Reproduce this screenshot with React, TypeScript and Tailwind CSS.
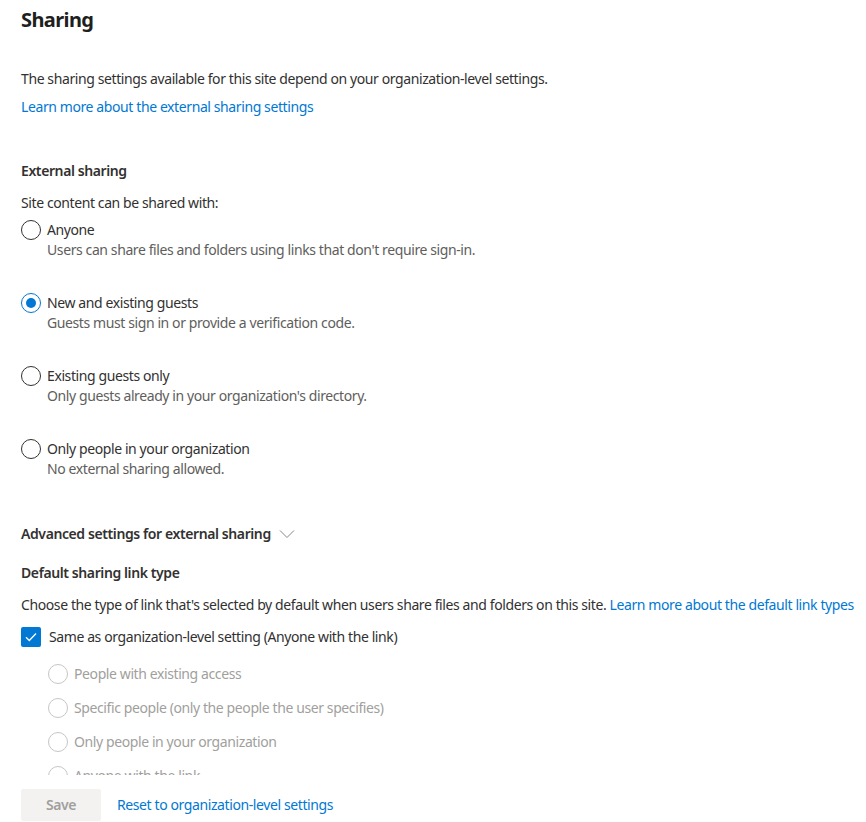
import { useState } from "react";

const sharingOptions = [
  {
    id: "anyone",
    label: "Anyone",
    desc: "Users can share files and folders using links that don't require sign-in.",
  },
  {
    id: "guests",
    label: "New and existing guests",
    desc: "Guests must sign in or provide a verification code.",
  },
  {
    id: "existing",
    label: "Existing guests only",
    desc: "Only guests already in your organization's directory.",
  },
  {
    id: "internal",
    label: "Only people in your organization",
    desc: "No external sharing allowed.",
  },
];

const linkTypes = [
  "People with existing access",
  "Specific people (only the people the user specifies)",
  "Only people in your organization",
  "Anyone with the link",
];

function Radio({ checked, disabled }: { checked?: boolean; disabled?: boolean }) {
  return (
    <span
      className={`flex h-5 w-5 shrink-0 items-center justify-center rounded-full border bg-white ${
        disabled ? "border-[#c8c6c4]" : checked ? "border-[#0078d4]" : "border-[#323130]"
      }`}
    >
      {checked && <span className="h-[10px] w-[10px] rounded-full bg-[#0078d4]" />}
    </span>
  );
}

export default function App() {
  const [choice, setChoice] = useState("guests");

  return (
    <div
      className="flex h-[822px] w-[866px] flex-col bg-white text-[14px] tracking-[-0.4px] text-[#323130]"
      style={{ fontFamily: '"Noto Sans", "Open Sans", sans-serif' }}
    >
      <div className="flex-1 overflow-hidden px-[21px] pt-[6px]">
        <h1 className="text-[20px] leading-[28px] font-bold tracking-[-0.6px] text-[#201f1e]">Sharing</h1>

        <p className="mt-[35px] leading-5">
          The sharing settings available for this site depend on your organization-level settings.
        </p>
        <a className="mt-2 block leading-5 text-[#0078d4]">Learn more about the external sharing settings</a>

        {/*External sharing*/}
        <h2 className="mt-[44px] leading-5 font-semibold">External sharing</h2>
        <p className="mt-3 leading-5">Site content can be shared with:</p>

        <div className="mt-[7px] flex flex-col gap-[34px]">
          {sharingOptions.map((o) => (
            <div key={o.id} className="flex cursor-pointer gap-[6px]" onClick={() => setChoice(o.id)}>
              <Radio checked={choice === o.id} />
              <div>
                <div className="leading-5">{o.label}</div>
                <div className="leading-[19px] text-[#605e5c]">{o.desc}</div>
              </div>
            </div>
          ))}
        </div>

        {/*Advanced*/}
        <div className="mt-[46px] flex items-center gap-[8px] leading-5 font-semibold">
          Advanced settings for external sharing
          <svg width="16" height="10" viewBox="0 0 16 10" fill="none">
            <path d="M1 1.5l7 7 7-7" stroke="#8a8886" strokeWidth="1" />
          </svg>
        </div>

        <h2 className="mt-[19px] leading-5 font-semibold">Default sharing link type</h2>
        <p className="mt-3 leading-5 whitespace-nowrap">
          Choose the type of link that's selected by default when users share files and folders on this site.{" "}
          <a className="text-[#0078d4]">Learn more about the default link types</a>
        </p>

        <div className="mt-3 flex items-center gap-2">
          <span className="flex h-5 w-5 items-center justify-center rounded-[2px] bg-[#0078d4]">
            <svg width="12" height="10" viewBox="0 0 12 10" fill="none">
              <path d="M1 5.2l3.3 3.3L11 1.5" stroke="white" strokeWidth="1.3" />
            </svg>
          </span>
          <span className="leading-5">Same as organization-level setting (Anyone with the link)</span>
        </div>

        <div className="mt-[17px] flex flex-col gap-[14px] pl-[27px]">
          {linkTypes.map((t) => (
            <div key={t} className="flex items-center gap-[6px]">
              <Radio disabled />
              <span className="leading-5 text-[#a19f9d]">{t}</span>
            </div>
          ))}
        </div>
      </div>

      {/*Footer*/}
      <div className="flex h-[47px] shrink-0 items-start gap-4 px-[21px] pt-[14px]">
        <button className="h-8 w-20 rounded-[2px] bg-[#f3f2f1] leading-5 font-semibold text-[#a19f9d]">Save</button>
        <a className="mt-[6px] leading-5 text-[#0078d4]">Reset to organization-level settings</a>
      </div>
    </div>
  );
}
